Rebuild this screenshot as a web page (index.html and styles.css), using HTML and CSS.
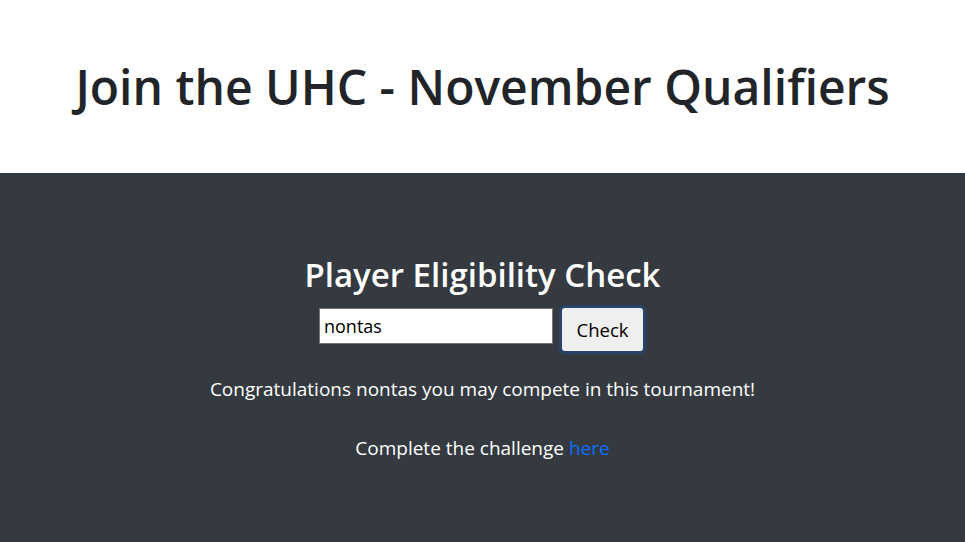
FILE: index.html
```html
<!DOCTYPE html>
<html>
<head>
<meta charset="utf-8">
<link rel="stylesheet" href="styles.css">
</head>
<body>
<header class="hero">
  <h1 class="title">Join the UHC - November Qualifiers</h1>
</header>
<main class="panel">
  <h2 class="subtitle">Player Eligibility Check</h2>
  <form class="check-form">
    <input class="name-input" type="text" value="nontas">
    <button class="check-btn" type="button">Check</button>
  </form>
  <p class="message">Congratulations nontas you may compete in this tournament!</p>
  <p class="message challenge">Complete the challenge <a href="#" class="link">here</a></p>
</main>
</body>
</html>
```
FILE: styles.css
```css
html, body {
  margin: 0;
  padding: 0;
  height: 100%;
}
body {
  font-family: "Open Sans", "Noto Sans", sans-serif;
  background: #343a40;
  color: #fff;
}
.hero {
  background: #fff;
  height: 173px;
  display: flex;
  align-items: center;
  justify-content: center;
}
.title {
  margin: 0;
  color: #212529;
  font-weight: 600;
  font-size: 48px;
  line-height: 1.2;
}
.panel {
  display: flex;
  flex-direction: column;
  align-items: center;
  padding-top: 82px;
}
.subtitle {
  margin: 0;
  font-size: 33px;
  font-weight: 600;
  line-height: 1.2;
}
.check-form {
  display: flex;
  align-items: center;
  gap: 6px;
  margin-top: 3px;
}
.name-input {
  width: 234px;
  height: 36px;
  box-sizing: border-box;
  border: 1px solid #767676;
  font-family: inherit;
  font-size: 18px;
  padding: 0 4px;
  color: #000;
}
.check-btn {
  width: 87px;
  height: 49px;
  box-sizing: border-box;
  background: #efefef;
  border: 3px solid #28446c;
  border-radius: 6px;
  font-family: inherit;
  font-size: 18.5px;
  color: #000;
  margin-top: 7px;
}
.message {
  margin: 21px 0 0;
  font-size: 19px;
  line-height: 1.5;
}
.challenge {
  margin-top: 31px;
}
.link {
  color: #0d6efd;
  text-decoration: none;
}
```
